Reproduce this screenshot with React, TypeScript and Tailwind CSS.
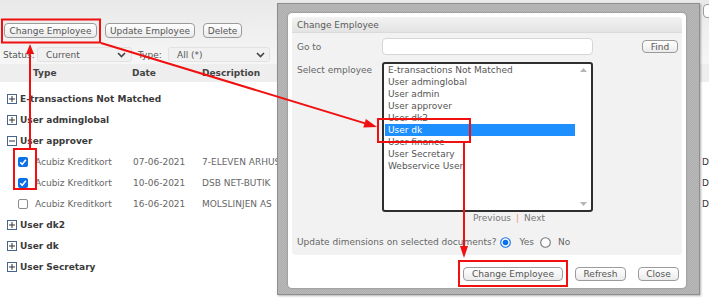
import React from 'react';

const groups = [
  { name: 'E-transactions Not Matched', open: false },
  { name: 'User adminglobal', open: false },
  { name: 'User approver', open: true },
];

const lines = [
  { checked: true, type: 'Acubiz Kreditkort', date: '07-06-2021', text: '7-ELEVEN ARHUS C' },
  { checked: true, type: 'Acubiz Kreditkort', date: '10-06-2021', text: 'DSB NET-BUTIK' },
  { checked: false, type: 'Acubiz Kreditkort', date: '16-06-2021', text: 'MOLSLINJEN AS' },
];

const moreGroups = ['User dk2', 'User dk', 'User Secretary'];

const employees = [
  'E-transactions Not Matched',
  'User adminglobal',
  'User admin',
  'User approver',
  'User dk2',
  'User dk',
  'User finance',
  'User Secretary',
  'Webservice User',
];

function Btn({ children, className = '' }: { children: React.ReactNode; className?: string }) {
  return (
    <div
      className={`flex items-center justify-center rounded-[4px] border border-[#9b9b9b] bg-gradient-to-b from-white to-[#ebebeb] text-[#555] whitespace-nowrap ${className}`}
    >
      {children}
    </div>
  );
}

function Toggle({ open }: { open: boolean }) {
  return (
    <svg width="10" height="10" viewBox="0 0 10 10" className="shrink-0">
      <rect x="0.5" y="0.5" width="9" height="9" fill="#fff" stroke="#46648c" />
      <line x1="2" y1="5" x2="8" y2="5" stroke="#333" />
      {!open && <line x1="5" y1="2" x2="5" y2="8" stroke="#333" />}
    </svg>
  );
}

function Check({ checked }: { checked: boolean }) {
  if (!checked) return <span className="block h-[10px] w-[10px] shrink-0 rounded-[2px] border border-[#8a8a8a] bg-white" />;
  return (
    <svg width="10" height="10" viewBox="0 0 10 10" className="shrink-0">
      <rect width="10" height="10" rx="2" fill="#0b6fe8" />
      <path d="M2.2 5.2 L4.2 7.2 L7.9 2.8" fill="none" stroke="#fff" strokeWidth="1.6" />
    </svg>
  );
}

function Chevron() {
  return (
    <svg width="9" height="6" viewBox="0 0 9 6">
      <path d="M1 1 L4.5 4.5 L8 1" fill="none" stroke="#444" strokeWidth="1.6" />
    </svg>
  );
}

function Radio({ on }: { on: boolean }) {
  return (
    <svg width="11" height="11" viewBox="0 0 11 11" className="shrink-0">
      <circle cx="5.5" cy="5.5" r="4.8" fill="#fff" stroke={on ? '#0b6fe8' : '#777'} strokeWidth="1.1" />
      {on && <circle cx="5.5" cy="5.5" r="2.8" fill="#0b6fe8" />}
    </svg>
  );
}

export default function App() {
  return (
    <div className="relative h-[304px] w-[709px] overflow-hidden bg-white font-['DejaVu_Sans',Verdana,sans-serif] text-[9px] leading-[12px]">
      {/* page underneath */}
      <div className="bg-gradient-to-b from-[#e9e9e9] to-[#f6f6f6] pb-[2px]">
        <div className="flex h-[23px] justify-end pt-[4px]">
          <div className="mr-[-8px] h-[14px] w-[14px] rounded-[4px] border border-[#9b9b9b] bg-white" />
        </div>
        <div className="flex gap-[8px] pl-[4px]">
          <Btn className="h-[15px] w-[93px]">Change Employee</Btn>
          <Btn className="h-[15px] w-[90px]">Update Employee</Btn>
          <Btn className="h-[15px] w-[39px]">Delete</Btn>
        </div>
        <div className="mt-[9px] flex h-[15px] items-center text-[#555]">
          <span className="w-[37px] overflow-hidden whitespace-nowrap pl-[3px]">Status: </span>
          <div className="flex h-[15px] w-[95px] items-center justify-between rounded-[3px] border border-[#e2e2e2] bg-[#f1f1f1] pl-[8px] pr-[5px]">
            <span>Current</span>
            <Chevron />
          </div>
          <span className="ml-[6px] w-[30px]">Type:</span>
          <div className="flex h-[15px] w-[102px] items-center justify-between rounded-[3px] border border-[#e2e2e2] bg-[#f1f1f1] pl-[8px] pr-[4px]">
            <span>All (*)</span>
            <Chevron />
          </div>
        </div>
      </div>
      <div className="flex h-[18px] items-center bg-[#eeeeee] pl-[33px] font-bold text-[#444]">
        <span className="w-[99px]">Type</span>
        <span className="w-[70px]">Date</span>
        <span>Description</span>
      </div>

      <div className="mt-[6px]">
        {groups.map((g) => (
          <div key={g.name} className="flex h-[21px] items-center gap-[3px] pl-[7px] font-bold text-[#3a3a3a]">
            <Toggle open={g.open} />
            <span>{g.name}</span>
          </div>
        ))}
        {lines.map((l) => (
          <div key={l.date} className="flex h-[21px] items-center whitespace-nowrap pl-[18px] text-[#666]">
            <Check checked={l.checked} />
            <span className="ml-[7px] w-[98px]">{l.type}</span>
            <span className="w-[69px]">{l.date}</span>
            <span className="flex-1">{l.text}</span>
            <span className="w-[7px] text-[#333]">D</span>
          </div>
        ))}
        {moreGroups.map((g) => (
          <div key={g} className="flex h-[21px] items-center gap-[3px] pl-[7px] font-bold text-[#3a3a3a]">
            <Toggle open={false} />
            <span>{g}</span>
          </div>
        ))}
      </div>

      {/* modal overlay */}
      <div className="absolute left-[277px] top-[3px] h-[292px] w-[423px] border border-[#8e8e8e] bg-[#b3b3b3] bg-[repeating-conic-gradient(#aeaeae_0_25%,#b9b9b9_0_50%)] bg-[length:2px_2px] pl-[10px] pt-[9px] shadow-[1px_1px_2px_rgba(0,0,0,0.3)]">
        <div className="flex h-[275px] w-[398px] flex-col rounded-[4px] bg-white p-[4px] text-[#666] shadow-[0_0_2px_rgba(0,0,0,0.35)]">
          <div className="flex h-[16px] items-center rounded-t-[3px] border-b border-[#dadada] bg-gradient-to-b from-[#f3f3f3] to-[#e3e3e3] pl-[5px] text-[#5a5a5a]">
            Change Employee
          </div>
          <div className="h-[222px] rounded-b-[4px] bg-[#f2f2f2] pl-[5px]">
            <div className="mt-[5px] flex h-[17px] items-center">
              <span className="w-[85px]">Go to</span>
              <div className="h-[17px] w-[211px] rounded-[4px] border border-[#d6d6d6] bg-white" />
              <Btn className="ml-[49px] h-[13px] w-[36px]">Find</Btn>
            </div>
            <div className="mt-[7px] flex">
              <span className="w-[85px] pt-[2px]">Select employee</span>
              <div className="flex h-[150px] w-[211px] rounded-[3px] border-2 border-[#2e2e2e] bg-white pl-[1px]">
                <div className="flex-1 text-[#555]">
                  {employees.map((e) => (
                    <div
                      key={e}
                      className={`h-[12px] whitespace-nowrap pl-[3px] ${e === 'User dk' ? 'bg-[#1e8fff] text-white' : ''}`}
                    >
                      {e}
                    </div>
                  ))}
                </div>
                <div className="flex w-[16px] flex-col items-center justify-between py-[4px]">
                  <svg width="7" height="4" viewBox="0 0 7 4"><path d="M0 4 L3.5 0 L7 4 Z" fill="#b5b5b5" /></svg>
                  <svg width="7" height="4" viewBox="0 0 7 4"><path d="M0 0 L3.5 4 L7 0 Z" fill="#b5b5b5" /></svg>
                </div>
              </div>
            </div>
            <div className="flex h-[12px] items-center pl-[176px] text-[#777]">
              <span>Previous</span>
              <span className="mx-[5px] text-[#f19a6c]">|</span>
              <span>Next</span>
            </div>
            <div className="mt-[12px] flex h-[12px] items-center whitespace-nowrap">
              <span>Update dimensions on selected documents?</span>
              <span className="ml-[4px]"><Radio on /></span>
              <span className="ml-[8px]">Yes</span>
              <span className="ml-[6px]"><Radio on={false} /></span>
              <span className="ml-[7px]">No</span>
            </div>
          </div>
          <div className="mt-[12px] flex justify-end gap-[12px] pr-[3px]">
            <Btn className="h-[14px] w-[100px]">Change Employee</Btn>
            <Btn className="h-[14px] w-[51px]">Refresh</Btn>
            <Btn className="h-[14px] w-[41px]">Close</Btn>
          </div>
        </div>
      </div>

      {/* red annotations */}
      <svg className="pointer-events-none absolute inset-0" width="709" height="304" viewBox="0 0 709 304">
        <g fill="none" stroke="#f01010" strokeWidth="2">
          <rect x="2" y="19.5" width="98" height="23" />
          <rect x="14" y="149" width="22" height="40" />
          <rect x="378" y="119" width="92" height="23" />
          <rect x="459" y="261" width="108" height="25" />
          <line x1="30" y1="149" x2="30" y2="52" />
          <line x1="101" y1="43" x2="366" y2="123.6" />
          <line x1="464" y1="143" x2="464" y2="247" />
        </g>
        <g fill="#f01010">
          <polygon points="30,44 26,54 34,54" />
          <polygon points="377,127 363.3,127.5 365.9,118.9" />
          <polygon points="464,258 460,246 468,246" />
        </g>
      </svg>
    </div>
  );
}
